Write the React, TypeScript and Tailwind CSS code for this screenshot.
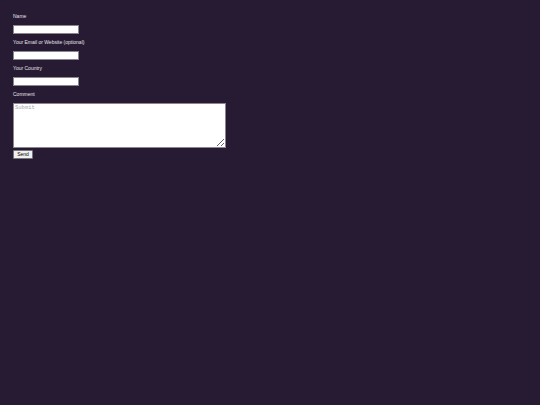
export default function App() {
  return (
    <div className="min-h-screen w-full bg-[#261b33] px-[13px] pt-[12px] font-['Liberation_Sans',Arial,sans-serif] text-white">
      <form className="flex flex-col">
        <label className="text-[5px] leading-[7px] mt-[1px] text-[#e6e2ea]">Name</label>
        <input className="mt-[5px] w-[66px] h-[9px] bg-white border border-[#8a8590]" />
        <label className="text-[5px] leading-[7px] mt-[5px] text-[#e6e2ea]">Your Email or Website (optional)</label>
        <input className="mt-[5px] w-[66px] h-[9px] bg-white border border-[#8a8590]" />
        <label className="text-[5px] leading-[7px] mt-[5px] text-[#e6e2ea]">Your Country</label>
        <input className="mt-[5px] w-[66px] h-[9px] bg-white border border-[#8a8590]" />
        <label className="text-[5px] leading-[7px] mt-[5px] text-[#e6e2ea]">Comment</label>
        <textarea
          placeholder="Submit"
          className="mt-[5px] w-[213px] h-[45px] bg-white border border-[#8a8590] px-[1px] py-0 text-[5.5px] leading-[7px] font-mono text-black placeholder:text-[#a8a8a8] resize"
        />
        <button
          type="button"
          className="mt-[2px] w-[20px] h-[9px] bg-[#f0f0f0] border border-[#767676] rounded-[1px] text-[5px] leading-[7px] text-black"
        >
          Send
        </button>
      </form>
    </div>
  );
}
